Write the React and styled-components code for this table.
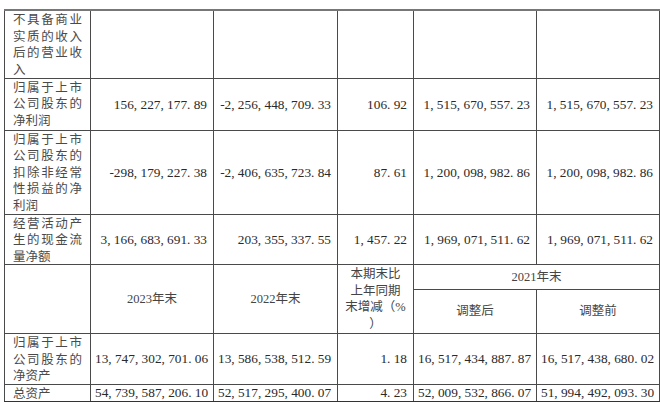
import React from "react";
import styled, { createGlobalStyle } from "styled-components";

const GlobalStyle = createGlobalStyle`
  html, body {
    margin: 0;
    padding: 0;
    background: #ffffff;
  }
  body {
    font-family: "Liberation Serif", "Noto Sans CJK SC", serif;
  }
`;

const Page = styled.div`
  width: 660px;
  height: 402px;
  padding: 9px 0 0 4px;
  box-sizing: border-box;
  overflow: hidden;
`;

const Table = styled.table`
  border-collapse: collapse;
  table-layout: fixed;
  width: 656px;
  border-top: 2px solid #777;
  border-bottom: 2px solid #333;
`;

const Row = styled.tr`
  height: ${(p) => p.$h}px;
`;

const Cell = styled.td`
  border: 1px solid #4a4a4a;
  padding: 0 6px 0 4px;
  font-size: 13.3px;
  line-height: 15px;
  color: #2a2a2a;
  vertical-align: middle;
  text-align: ${(p) => p.$align || "right"};
  white-space: nowrap;
  overflow: hidden;
`;

const LabelCell = styled(Cell)`
  font-family: "Noto Sans CJK SC", sans-serif;
  font-size: 12.5px;
  line-height: 16.5px;
  color: #4a4a4a;
  text-align: justify;
  text-justify: inter-character;
  white-space: normal;
  vertical-align: top;
  padding: 0 8px 0 8px;
`;

const HeadCell = styled(Cell)`
  font-family: "Liberation Serif", "Noto Sans CJK SC", serif;
  font-size: 12.5px;
  line-height: 16.5px;
  text-align: center;
  color: #444;
  padding: 0 4px;
`;

const Punct = styled.span`
  display: inline-block;
  width: 0.5em;
  text-align: left;
`;

function Num({ value }) {
  return (
    <>
      {value.split("").map((ch, i) =>
        ch === "," || ch === "." ? <Punct key={i}>{ch}</Punct> : ch
      )}
    </>
  );
}

const topRows = [
  { label: "不具备商业实质的收入后的营业收入", h: 68, vals: ["", "", "", "", ""] },
  {
    label: "归属于上市公司股东的净利润",
    h: 52,
    vals: ["156,227,177.89", "-2,256,448,709.33", "106.92", "1,515,670,557.23", "1,515,670,557.23"],
  },
  {
    label: "归属于上市公司股东的扣除非经常性损益的净利润",
    h: 84,
    vals: ["-298,179,227.38", "-2,406,635,723.84", "87.61", "1,200,098,982.86", "1,200,098,982.86"],
  },
  {
    label: "经营活动产生的现金流量净额",
    h: 50,
    vals: ["3,166,683,691.33", "203,355,337.55", "1,457.22", "1,969,071,511.62", "1,969,071,511.62"],
  },
];

const bottomRows = [
  {
    label: "归属于上市公司股东的净资产",
    h: 50,
    vals: ["13,747,302,701.06", "13,586,538,512.59", "1.18", "16,517,434,887.87", "16,517,438,680.02"],
  },
  {
    label: "总资产",
    h: 17,
    vals: ["54,739,587,206.10", "52,517,295,400.07", "4.23", "52,009,532,866.07", "51,994,492,093.30"],
  },
];

function DataRow({ row }) {
  return (
    <Row $h={row.h}>
      <LabelCell>{row.label}</LabelCell>
      {row.vals.map((v, i) => (
        <Cell key={i}>
          <Num value={v} />
        </Cell>
      ))}
    </Row>
  );
}

export default function App() {
  return (
    <Page>
      <GlobalStyle />
      <Table>
        <colgroup>
          <col style={{ width: 86 }} />
          <col style={{ width: 123 }} />
          <col style={{ width: 124 }} />
          <col style={{ width: 76 }} />
          <col style={{ width: 123 }} />
          <col style={{ width: 123 }} />
        </colgroup>
        <tbody>
          {topRows.map((r, i) => (
            <DataRow key={i} row={r} />
          ))}
          <Row $h={25}>
            <HeadCell rowSpan={2} />
            <HeadCell rowSpan={2}>2023年末</HeadCell>
            <HeadCell rowSpan={2}>2022年末</HeadCell>
            <HeadCell rowSpan={2}>
              本期末比
              <br />
              上年同期
              <br />
              末增减（%
              <br />）
            </HeadCell>
            <HeadCell colSpan={2}>2021年末</HeadCell>
          </Row>
          <Row $h={44}>
            <HeadCell>调整后</HeadCell>
            <HeadCell>调整前</HeadCell>
          </Row>
          {bottomRows.map((r, i) => (
            <DataRow key={i} row={r} />
          ))}
        </tbody>
      </Table>
    </Page>
  );
}
